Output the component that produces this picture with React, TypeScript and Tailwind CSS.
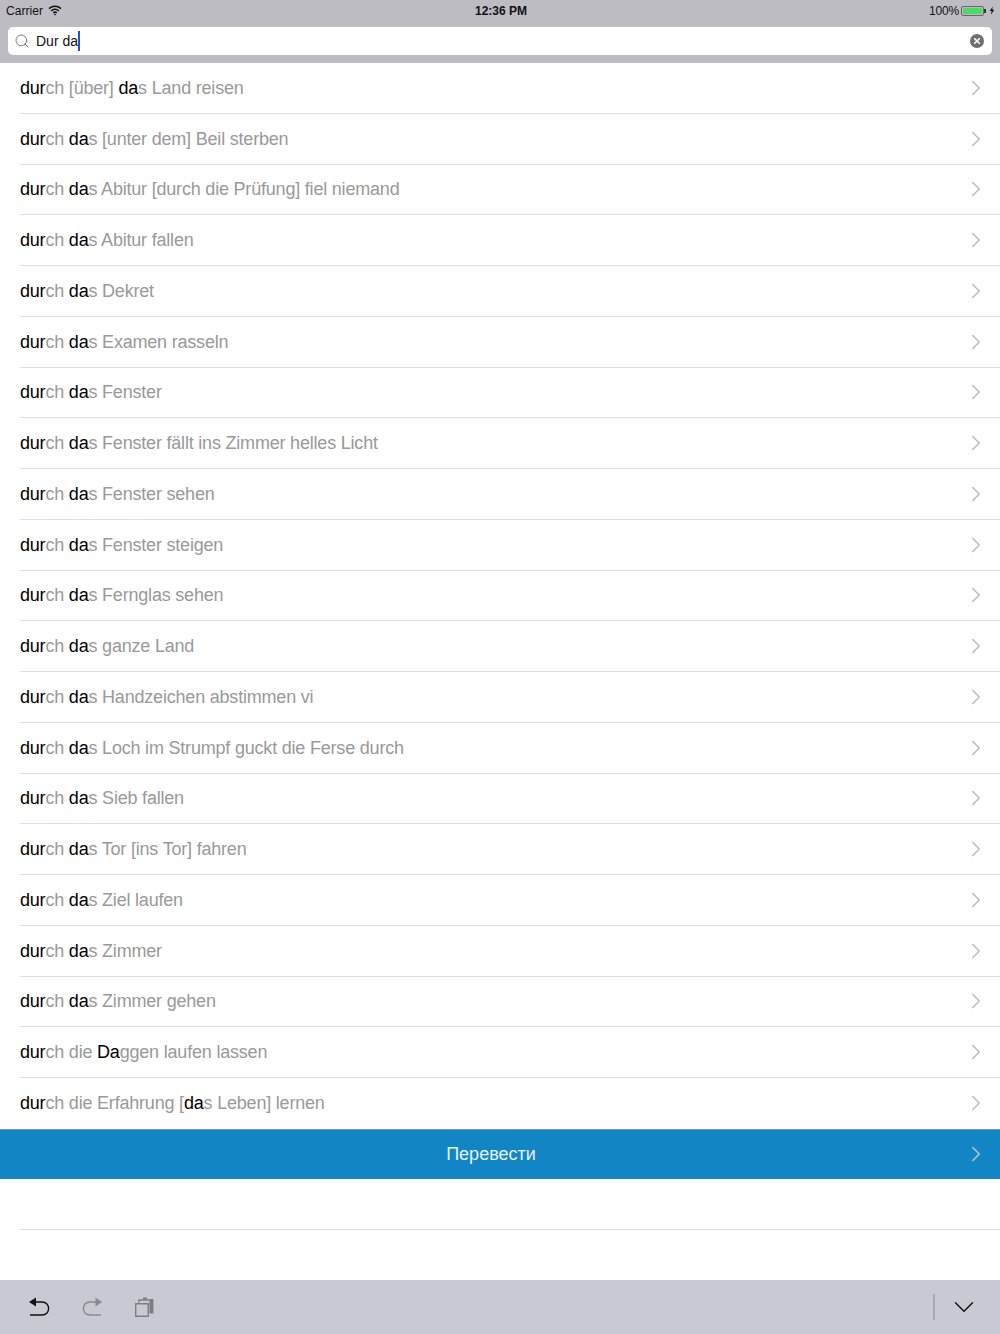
import React from 'react';
import { Search, ChevronRight, ChevronDown } from 'lucide-react';

// odd segments between pipes are the matched (black) part
const ROWS = [
  '|dur|ch [über] |da|s Land reisen',
  '|dur|ch |da|s [unter dem] Beil sterben',
  '|dur|ch |da|s Abitur [durch die Prüfung] fiel niemand',
  '|dur|ch |da|s Abitur fallen',
  '|dur|ch |da|s Dekret',
  '|dur|ch |da|s Examen rasseln',
  '|dur|ch |da|s Fenster',
  '|dur|ch |da|s Fenster fällt ins Zimmer helles Licht',
  '|dur|ch |da|s Fenster sehen',
  '|dur|ch |da|s Fenster steigen',
  '|dur|ch |da|s Fernglas sehen',
  '|dur|ch |da|s ganze Land',
  '|dur|ch |da|s Handzeichen abstimmen vi',
  '|dur|ch |da|s Loch im Strumpf guckt die Ferse durch',
  '|dur|ch |da|s Sieb fallen',
  '|dur|ch |da|s Tor [ins Tor] fahren',
  '|dur|ch |da|s Ziel laufen',
  '|dur|ch |da|s Zimmer',
  '|dur|ch |da|s Zimmer gehen',
  '|dur|ch die |Da|ggen laufen lassen',
  '|dur|ch die Erfahrung [|da|s Leben] lernen',
];

function Row({ text, last }: { text: string; last: boolean }) {
  return (
    <div className="h-[50.75px] pl-5 relative flex items-center">
      <div className="flex-1 text-[18px] tracking-[-0.2px] text-[#999999] whitespace-pre">
        {text.split('|').map((part, i) => (
          <span key={i} className={i % 2 ? 'text-black' : ''}>{part}</span>
        ))}
      </div>
      <ChevronRight size={26} strokeWidth={1.4} className="text-[#bcbcc0] mr-[11.5px] mb-[1px]" />
      {!last && <div className="absolute left-5 right-0 bottom-0 h-px bg-[#dfdfdf]" />}
    </div>
  );
}

function Wifi() {
  return (
    <svg width="14" height="11" viewBox="0 0 14 11" fill="none" stroke="#111" strokeWidth="1.5">
      <path d="M1 3.6 C4.5 0.6 9.5 0.6 13 3.6" />
      <path d="M3.2 5.8 C5.5 3.9 8.5 3.9 10.8 5.8" />
      <path d="M5.3 7.9 C6.3 7 7.7 7 8.7 7.9" />
      <path d="M7 10.5 L5.9 9.2 C6.5 8.8 7.5 8.8 8.1 9.2 Z" fill="#111" stroke="none" />
    </svg>
  );
}

function Battery() {
  return (
    <div className="flex items-center">
      <div className="w-[23px] h-[10px] border border-[#666] rounded-[2px] p-[1px]">
        <div className="w-full h-full bg-[#4cd964] rounded-[1px]" />
      </div>
      <div className="w-[1.5px] h-[4px] bg-[#333]" />
      <svg width="6" height="11" viewBox="0 0 8 11" className="ml-[3.5px]">
        <path d="M5 0 L1 6 H3.5 L2.5 11 L7 4.5 H4.4 Z" fill="#111" />
      </svg>
    </div>
  );
}

function ToolIcons() {
  return (
    <div className="flex items-center pl-[29px]">
      <svg width="22" height="20" viewBox="0 0 22 20" fill="none" stroke="#111" strokeWidth="1.4">
        <path d="M5 5 H13 C21.8 5 21.8 18 13 18 H1" />
        <path d="M0 5 L7 0.5 V9.5 Z" fill="#111" stroke="none" />
      </svg>
      <svg width="22" height="20" viewBox="0 0 22 20" fill="none" stroke="#8a8a8e" strokeWidth="1.4" className="ml-[30px]">
        <path d="M16 5 H9 C0.2 5 0.2 18 9 18 H20" />
        <path d="M21 5 L14.5 0.5 V9.5 Z" fill="#8a8a8e" stroke="none" />
      </svg>
      <svg width="19" height="20" viewBox="0 0 19 20" fill="none" stroke="#7d7d81" strokeWidth="1.4" className="ml-[32px]">
        <path d="M0.7 6.7 H13.3 V19.3 H0.7 Z" />
        <path d="M4 5.5 V3 H14.5" />
        <path d="M8 2.5 V0.5 H12 V2.5 Z" fill="#7d7d81" stroke="none" />
        <path d="M14.5 2 H18.4 V16.5 H14.5 Z" fill="#7d7d81" stroke="none" />
      </svg>
    </div>
  );
}

export default function App() {
  return (
    <div className="w-[1000px] h-[1334px] bg-white flex flex-col font-['Liberation_Sans',Arial,sans-serif] overflow-hidden">
      <div className="h-[63px] bg-[#bdbcc2] shrink-0 flex flex-col">
        {/* status bar */}
        <div className="h-[21px] flex items-center justify-between pl-[6px] pr-[5px] text-[12px] text-[#111] relative">
          <div className="flex items-center gap-[5px]">
            <span className="tracking-[0.05px]">Carrier</span>
            <Wifi />
          </div>
          <span className="absolute left-[475px] font-bold text-[12px]">12:36 PM</span>
          <div className="flex items-center gap-[2px]">
            <span className="tracking-[-0.2px]">100%</span>
            <Battery />
          </div>
        </div>
        {/* search field */}
        <div className="mx-2 mt-[6px] h-[28px] bg-white rounded-[5px] flex items-center pl-[6px] pr-[8px]">
          <Search size={16} strokeWidth={1.3} className="text-[#66666b]" />
          <span className="ml-[6px] text-[14px] text-[#111]">Dur da</span>
          <span className="w-[2px] h-[20px] bg-[#2a4bd7]" />
          <span className="ml-auto w-[14px] h-[14px] rounded-full bg-[#6f6f73] flex items-center justify-center">
            <svg width="8" height="8" viewBox="0 0 8 8" stroke="#fff" strokeWidth="1.6">
              <path d="M1.2 1.2 L6.8 6.8 M6.8 1.2 L1.2 6.8" />
            </svg>
          </span>
        </div>
      </div>

      <div className="flex-1 flex flex-col">
        {ROWS.map((r, i) => <Row key={r} text={r} last={i === ROWS.length - 1} />)}
        <div className="h-[50px] bg-[#1285c5] flex items-center relative shrink-0 border-t border-[#5a9cc4]">
          <span className="w-[982px] text-center text-[18px] text-[#e9f3f9]">Перевести</span>
          <ChevronRight size={26} strokeWidth={1.4} className="text-[#b9c9d4] absolute right-[11.5px]" />
        </div>
        <div className="h-[51px] relative shrink-0">
          <div className="absolute left-5 right-0 bottom-0 h-px bg-[#dfdfdf]" />
        </div>
      </div>

      <div className="h-[54px] bg-[#c8cad3] shrink-0 flex items-center justify-between">
        <ToolIcons />
        <div className="flex items-center">
          <div className="w-[2px] h-[26px] bg-[#a9abb1]" />
          <ChevronDown size={34} strokeWidth={1} className="text-[#111] ml-[11.5px] mr-[19.5px]" />
        </div>
      </div>
    </div>
  );
}
